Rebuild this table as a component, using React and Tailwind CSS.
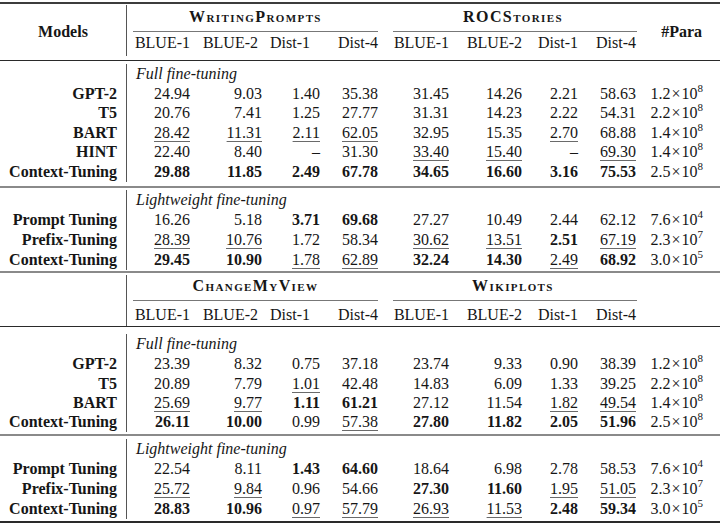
import React from 'react';

const cols = 'grid grid-cols-[127px_69px_72px_58px_58px_71px_73px_56px_58px_78px]';
const subPad = ['pr-[6px]', 'pr-[10px]', 'pr-[16px]', 'pr-[6px]', 'pr-[6px]', 'pr-[6px]', 'pr-[6px]', 'pr-[6px]'];
const subHeads = ['BLUE-1', 'BLUE-2', 'Dist-1', 'Dist-4', 'BLUE-1', 'BLUE-2', 'Dist-1', 'Dist-4'];

const Val = ({ v }) => {
    if (v.startsWith('**')) return <span className="font-bold">{v.slice(2)}</span>;
    if (v.startsWith('_')) return <span className="underline decoration-1 decoration-[#6a6a6a] underline-offset-[3px]">{v.slice(1)}</span>;
    return <span>{v}</span>;
};

const Para = ({ p }) => {
    const [m, e] = p.split('^');
    return (
        <span>
            {m}<span className="mx-[1px]">×</span>10<sup className="text-[11px] relative top-[-7px]">{e}</sup>
        </span>
    );
};

const DataRow = ({ name, vals, para, h }) => (
    <div className={`${cols} ${h}`}>
        <div className="border-r border-[#555] text-right pr-[9px] font-bold flex items-center justify-end">{name}</div>
        {vals.map((v, i) => (
            <div key={i} className="text-right pr-[6px] flex items-center justify-end"><Val v={v} /></div>
        ))}
        <div className="text-right pr-[17px] flex items-center justify-end"><Para p={para} /></div>
    </div>
);

const Label = ({ text, h }) => (
    <div className={`${cols} ${h}`}>
        <div className="border-r border-[#555]"></div>
        <div className="col-span-8 pl-[9px] italic flex items-center">{text}</div>
        <div></div>
    </div>
);

// rows: grid row sizes, p1/p2: top padding of the group title and the sub-header texts
const Header = ({ g1, g2, models, para, rows, p1, p2 }) => (
    <div className={`${cols} ${rows}`}>
        <div className="row-span-3 border-r border-[#555] font-bold flex items-center justify-center pt-[2px]">{models}</div>
        <div className={`col-span-4 font-bold [font-variant:small-caps] tracking-[1.4px] leading-[18px] text-center ${p1}`}>{g1}</div>
        <div className={`col-span-4 font-bold [font-variant:small-caps] tracking-[1.4px] leading-[18px] text-center ${p1}`}>{g2}</div>
        <div className="row-span-3 font-bold flex items-center justify-end pr-[18px] pt-[2px]">{para}</div>
        <div className="col-span-4 mx-[6px] bg-[#777]"></div>
        <div className="col-span-4 ml-[9px] mr-[5px] bg-[#777]"></div>
        {subHeads.map((s, i) => (
            <div key={i} className={`text-right ${subPad[i]} leading-[22px] ${p2}`}>{s}</div>
        ))}
    </div>
);

const Block = ({ label, rows, heights, labelH }) => (
    <div>
        <Label text={label} h={labelH} />
        {rows.map((r, i) => (
            <DataRow key={i} name={r[0]} vals={r.slice(1, 9)} para={r[9]} h={heights[i]} />
        ))}
    </div>
);

const fullA = [
    ['GPT-2', '24.94', '9.03', '1.40', '35.38', '31.45', '14.26', '2.21', '58.63', '1.2^8'],
    ['T5', '20.76', '7.41', '1.25', '27.77', '31.31', '14.23', '2.22', '54.31', '2.2^8'],
    ['BART', '_28.42', '_11.31', '_2.11', '_62.05', '32.95', '15.35', '_2.70', '68.88', '1.4^8'],
    ['HINT', '22.40', '8.40', '–', '31.30', '_33.40', '_15.40', '–', '_69.30', '1.4^8'],
    ['Context-Tuning', '**29.88', '**11.85', '**2.49', '**67.78', '**34.65', '**16.60', '**3.16', '**75.53', '2.5^8'],
];
const lightA = [
    ['Prompt Tuning', '16.26', '5.18', '**3.71', '**69.68', '27.27', '10.49', '2.44', '62.12', '7.6^4'],
    ['Prefix-Tuning', '_28.39', '_10.76', '1.72', '58.34', '_30.62', '_13.51', '**2.51', '_67.19', '2.3^7'],
    ['Context-Tuning', '**29.45', '**10.90', '_1.78', '_62.89', '**32.24', '**14.30', '_2.49', '**68.92', '3.0^5'],
];
const fullB = [
    ['GPT-2', '23.39', '8.32', '0.75', '37.18', '23.74', '9.33', '0.90', '38.39', '1.2^8'],
    ['T5', '20.89', '7.79', '_1.01', '42.48', '14.83', '6.09', '1.33', '39.25', '2.2^8'],
    ['BART', '_25.69', '_9.77', '**1.11', '**61.21', '27.12', '11.54', '_1.82', '_49.54', '1.4^8'],
    ['Context-Tuning', '**26.11', '**10.00', '0.99', '_57.38', '**27.80', '**11.82', '**2.05', '**51.96', '2.5^8'],
];
const lightB = [
    ['Prompt Tuning', '22.54', '8.11', '**1.43', '**64.60', '18.64', '6.98', '2.78', '58.53', '7.6^4'],
    ['Prefix-Tuning', '_25.72', '_9.84', '0.96', '54.66', '**27.30', '**11.60', '_1.95', '_51.05', '2.3^7'],
    ['Context-Tuning', '**28.83', '**10.96', '_0.97', '_57.79', '_26.93', '_11.53', '**2.48', '**59.34', '3.0^5'],
];

export default function App() {
    return (
        <div className="w-[720px] h-[524px] bg-white text-[#161616] text-[16px] leading-[20px] overflow-hidden [font-family:'Liberation_Serif',serif]">
            <div className="h-[2px]"></div>
            <div className="h-[2px] bg-[#3c3c3c]"></div>
            <div className="h-[1px]"></div>
            <Header g1="WritingPrompts" g2="ROCStories" models="Models" para="#Para" rows="grid-rows-[26px_1px_24px]" p1="pt-[3px]" p2="pt-0" />
            <div className="h-[3.5px]"></div>
            <div className="h-[1px] bg-[#2a2a2a]"></div>
            <div className="h-[3px]"></div>
            <Block label="Full fine-tuning" rows={fullA} labelH="h-[20px]" heights={['h-[19.5px]', 'h-[19.5px]', 'h-[19.5px]', 'h-[19.5px]', 'h-[19.5px]']} />
            <div className="h-[4.5px]"></div>
            <div className="h-[2px] bg-[#8a8a8a]"></div>
            <div className="h-[2px]"></div>
            <Block label="Lightweight fine-tuning" rows={lightA} labelH="h-[20px]" heights={['h-[20px]', 'h-[20px]', 'h-[20px]']} />
            <div className="h-[1.5px]"></div>
            <div className="h-[2px] bg-[#8a8a8a]"></div>
            <div className="h-[2px]"></div>
            <Header g1="ChangeMyView" g2="Wikiplots" models="" para="" rows="grid-rows-[25px_1px_25px]" p1="pt-[2px]" p2="pt-[3px]" />
            <div className="h-[1px] bg-[#2a2a2a]"></div>
            <div className="h-[6.5px]"></div>
            <Block label="Full fine-tuning" rows={fullB} labelH="h-[20px]" heights={['h-[20px]', 'h-[19.5px]', 'h-[19px]', 'h-[19.5px]']} />
            <div className="h-[2.5px]"></div>
            <div className="h-[2px] bg-[#8a8a8a]"></div>
            <div className="h-[3px]"></div>
            <Block label="Lightweight fine-tuning" rows={lightB} labelH="h-[20px]" heights={['h-[20px]', 'h-[20px]', 'h-[19px]']} />
            <div className="h-[3px]"></div>
            <div className="h-[2px] bg-[#2a2a2a]"></div>
        </div>
    );
}
